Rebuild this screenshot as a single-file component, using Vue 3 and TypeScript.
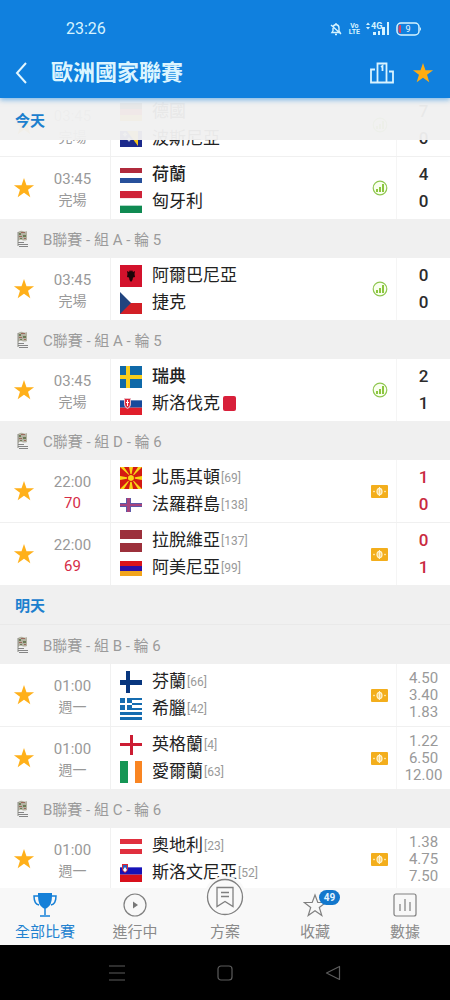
<script setup lang="ts">
interface Shape { d: string; c: string }
interface Team { name: string; flag: string; rank?: number; winner?: boolean; redCard?: boolean }
interface Match { kind: 'match'; time: string; status: string; live?: boolean; icon: 'stats' | 'ticket'; teams: Team[]; values: string[]; odds?: boolean }
interface Group { kind: 'group'; label: string }
interface Day { kind: 'day'; label: string }
type Item = Match | Group | Day

const rect = (x: number, y: number, w: number, h: number): string => `M${x} ${y}h${w}v${h}h${-w}z`
const bands = (top: number, height: number, colors: string[]): Shape[] =>
  colors.map((c, i) => ({ d: rect(0, top + (i * height) / colors.length, 22, height / colors.length), c }))

const flags: Record<string, Shape[]> = {
  de: bands(2, 18, ['#222', '#d8222c', '#f7b500']),
  ba: [
    { d: rect(0, 3, 22, 16), c: '#1c2a8c' },
    { d: 'M7 3H18V18z', c: '#f5c518' },
    { d: 'M5 4l1 1.500 1.500 1-1.500 1-1 1.500-1-1.500-1.500-1 1.500-1zM9 9l1 1.500 1.500 1-1.500 1-1 1.500-1-1.500-1.500-1 1.500-1z', c: '#c8cfe8' },
  ],
  nl: bands(4, 15, ['#b02a3c', '#fff', '#27509b']),
  hu: bands(0, 22, ['#cf2338', '#fff', '#0f8a52']),
  al: [
    { d: rect(0, 0, 22, 22), c: '#d3122c' },
    { d: 'M7 6l2 1 1-2 1 1.500L12 5l1 2 2-1-.5 3 .5 3-2 .500-.5 2.500L11 17l-1.500-2-.5-2.500-2-.500.500-3z', c: '#1b0508' },
  ],
  cz: [
    { d: rect(0, 0, 22, 11), c: '#fff' },
    { d: rect(0, 11, 22, 11), c: '#d21f26' },
    { d: 'M0 0L11 11 0 22z', c: '#20447f' },
  ],
  se: [
    { d: rect(0, 0, 22, 22), c: '#0f69a8' },
    { d: rect(6, 0, 4, 22) + rect(0, 9, 22, 4), c: '#f7ce1d' },
  ],
  sk: [
    ...bands(0, 22, ['#fff', '#174a9c', '#e01e2b']),
    { d: 'M4 5h7v6q0 3-3.500 5Q4 14 4 11z', c: '#e9b9c4' },
    { d: 'M5 6h5v5q0 2-2.500 4Q5 13 5 11z', c: '#dd2739' },
    { d: rect(7, 7, 1, 6) + rect(6, 9, 3, 1), c: '#fff' },
  ],
  mk: [
    { d: rect(0, 0, 22, 22), c: '#d41a12' },
    { d: 'M0 0h4l7 10zM9 0h4l-2 10zM18 0h4L11 11zM22 9v4l-11-2zM22 22h-4l-7-11zM13 22H9l2-11zM4 22H0l11-11zM0 13V9l11 2z', c: '#f9d616' },
    { d: 'M11 7a4 4 0 1 1-.1 0z', c: '#d41a12' },
    { d: 'M11 8a3 3 0 1 1-.1 0z', c: '#f9d616' },
  ],
  fo: [
    { d: rect(0, 4, 22, 14), c: '#fff' },
    { d: rect(6, 4, 5, 14) + rect(0, 9, 22, 4), c: '#5c59a8' },
    { d: rect(7, 4, 3, 14) + rect(0, 10, 22, 2), c: '#a8447d' },
  ],
  lv: [{ d: rect(0, 0, 22, 9) + rect(0, 13, 22, 9), c: '#9c303b' }],
  am: bands(4, 15, ['#d9141c', '#2b10a8', '#f2a51c']),
  fi: [{ d: rect(6, 0, 4, 22) + rect(0, 9, 22, 5), c: '#08367e' }],
  gr: [
    { d: rect(0, 0, 22, 22), c: '#156cb0' },
    { d: rect(12, 2, 10, 3) + rect(12, 7, 10, 3) + rect(0, 12, 22, 2) + rect(0, 17, 22, 2), c: '#fff' },
    { d: rect(5, 0, 2, 12) + rect(0, 5, 12, 2), c: '#fff' },
  ],
  en: [{ d: rect(10, 1, 3, 20) + rect(0, 9, 22, 3), c: '#cc1d33' }],
  ie: [
    { d: rect(0, 0, 8, 22), c: '#159655' },
    { d: rect(15, 0, 7, 22), c: '#f98522' },
  ],
  at: bands(4, 15, ['#e02f3e', '#fff', '#e02f3e']),
  si: [
    ...bands(-2, 22, ['#fff', '#1612b8', '#d8101c']),
    { d: 'M2 2h6v5q0 2-3 4Q2 9 2 7z', c: '#dc2635' },
    { d: 'M3 3h4v4q0 1-2 3Q3 8 3 7z', c: '#2b5cc0' },
    { d: 'M3 8l2-3 2 3-2 2z', c: '#fff' },
  ],
}

const ended = { kind: 'match', time: '03:45', status: '完場', icon: 'stats' } as const
const upcoming = { kind: 'match', time: '01:00', status: '週一', icon: 'ticket', odds: true } as const

const items: Item[] = [
  { ...ended, teams: [{ name: '德國', flag: 'de', winner: true }, { name: '波斯尼亞', flag: 'ba' }], values: ['7', '0'] },
  { ...ended, teams: [{ name: '荷蘭', flag: 'nl', winner: true }, { name: '匈牙利', flag: 'hu' }], values: ['4', '0'] },
  { kind: 'group', label: 'B聯賽 - 組 A - 輪 5' },
  { ...ended, teams: [{ name: '阿爾巴尼亞', flag: 'al' }, { name: '捷克', flag: 'cz' }], values: ['0', '0'] },
  { kind: 'group', label: 'C聯賽 - 組 A - 輪 5' },
  { ...ended, teams: [{ name: '瑞典', flag: 'se', winner: true }, { name: '斯洛伐克', flag: 'sk', redCard: true }], values: ['2', '1'] },
  { kind: 'group', label: 'C聯賽 - 組 D - 輪 6' },
  { kind: 'match', time: '22:00', status: '70', live: true, icon: 'ticket', teams: [{ name: '北馬其頓', flag: 'mk', rank: 69 }, { name: '法羅群島', flag: 'fo', rank: 138 }], values: ['1', '0'] },
  { kind: 'match', time: '22:00', status: '69', live: true, icon: 'ticket', teams: [{ name: '拉脫維亞', flag: 'lv', rank: 137 }, { name: '阿美尼亞', flag: 'am', rank: 99 }], values: ['0', '1'] },
  { kind: 'day', label: '明天' },
  { kind: 'group', label: 'B聯賽 - 組 B - 輪 6' },
  { ...upcoming, teams: [{ name: '芬蘭', flag: 'fi', rank: 66 }, { name: '希臘', flag: 'gr', rank: 42 }], values: ['4.50', '3.40', '1.83'] },
  { ...upcoming, teams: [{ name: '英格蘭', flag: 'en', rank: 4 }, { name: '愛爾蘭', flag: 'ie', rank: 63 }], values: ['1.22', '6.50', '12.00'] },
  { kind: 'group', label: 'B聯賽 - 組 C - 輪 6' },
  { ...upcoming, teams: [{ name: '奧地利', flag: 'at', rank: 23 }, { name: '斯洛文尼亞', flag: 'si', rank: 52 }], values: ['1.38', '4.75', '7.50'] },
]

const starPath = 'M12 1l2.700 8H23l-6.600 5 2.500 8L12 17.200 5.100 22l2.500-8L1 9h8.300z'
</script>

<template>
  <div class="app">
    <header class="top">
      <div class="status">
        <span class="clock">23:26</span>
        <div class="signals">
          <svg viewBox="0 0 12 14" width="12" height="14" fill="none" stroke="#d5f3ff" stroke-width="1.400">
            <path d="M3 9V6q0-3 3-3.500Q9 3 9 6v3l1 1.500H2L3 9M5 12.500h2M6 1v1.500M1 3l10 9" />
          </svg>
          <span class="volte"><span>Vo</span><span>LTE</span></span>
          <svg viewBox="0 0 26 16" width="26" height="16" fill="#d5f3ff">
            <path d="M1 4l2-2.500L5 4zM1 6l2 2.500L5 6zM8 11h3v3H8zM13 10h2v4h-2zM17 6h3v8h-3zM22 1h2v13h-2z" />
            <text x="6" y="8" font-size="9" font-weight="700">4G</text>
          </svg>
          <svg class="battery" viewBox="0 0 26 14" width="26" height="14">
            <rect x="1" y="1" width="22" height="12" rx="4" fill="none" stroke="#d5f3ff" stroke-width="1.500" />
            <path d="M24 5q2 2 0 4z" fill="#d5f3ff" />
            <path d="M4 3h1v8H4Q2.500 11 2.500 9V5Q2.500 3 4 3z" fill="#d8405f" />
            <text x="12" y="10" font-size="9" text-anchor="middle" fill="#e4f7ff">9</text>
          </svg>
        </div>
      </div>
      <div class="titlebar">
        <button class="back" aria-label="返回">
          <svg viewBox="0 0 14 22" width="14" height="22" fill="none" stroke="#e2f6ff" stroke-width="2"><path d="M12 1L3 11l9 10" /></svg>
        </button>
        <h1>歐洲國家聯賽</h1>
        <button aria-label="排名">
          <svg viewBox="0 0 24 22" width="24" height="22" fill="none" stroke="#d9f3ff" stroke-width="1.800">
            <path d="M7.500 20.500V1.500h9v19M5 7.500H1v13h22v-11h-4M11 5l1.500-1v5" />
          </svg>
        </button>
        <button class="fav" aria-label="收藏聯賽">
          <svg viewBox="0 0 24 24" width="22" height="22"><path :d="starPath" fill="#ffac10" /></svg>
        </button>
      </div>
    </header>

    <main class="content">
      <h2 class="day pinned">今天</h2>
      <ul class="list">
        <template v-for="(item, i) in items" :key="i">
          <li v-if="item.kind === 'day'" class="day">{{ item.label }}</li>
          <li v-else-if="item.kind === 'group'" class="group">
            <svg viewBox="0 0 12 18" width="12" height="18">
              <path d="M1 2q3-2 5-1t4 0v9q-3 1-5 0t-4 1z" fill="#b4b3a3" />
              <path d="M2 3h2v2H2zM6 5h3v2H6zM3 8h2v1H3z" fill="#6d7d58" />
              <path d="M4 2h4v1H4zM2 6h3v1H2zM7 8h2v1H7z" fill="#9b6a5c" />
              <path d="M1 2v14" stroke="#8c8c84" stroke-width="1" />
              <path d="M1 12h6v1H1zM1 14h10v1H1zM2 16h9v1H2z" fill="#858585" />
            </svg>
            <span>{{ item.label }}</span>
          </li>
          <li v-else class="match">
            <button aria-label="收藏">
              <svg viewBox="0 0 24 24" width="22" height="22"><path :d="starPath" fill="#ffb01a" /></svg>
            </button>
            <div class="when">
              <span class="time">{{ item.time }}</span>
              <span :class="item.live ? 'minute' : 'state'">{{ item.status }}</span>
            </div>
            <div class="teams">
              <div v-for="team in item.teams" :key="team.name" class="team">
                <svg viewBox="0 0 22 22" width="22" height="22">
                  <path v-for="(s, k) in flags[team.flag]" :key="k" :d="s.d" :fill="s.c" />
                </svg>
                <span class="name" :class="{ winner: team.winner }">{{ team.name }}</span>
                <span v-if="team.rank" class="rank">[{{ team.rank }}]</span>
                <span v-if="team.redCard" class="card"></span>
              </div>
            </div>
            <div class="badge">
              <svg v-if="item.icon === 'stats'" viewBox="0 0 16 16" width="16" height="16">
                <circle cx="8" cy="8" r="6.800" fill="#f9ffee" stroke="#8fc650" stroke-width="1.200" />
                <path d="M4 9h2v3H4zM7 7h2v5H7zM10 4h2v8h-2z" fill="#8cc63f" />
              </svg>
              <svg v-else class="ticket" viewBox="0 0 17 13" width="17" height="13">
                <rect width="17" height="13" rx="1" fill="#f3ae1c" />
                <ellipse cx="8.500" cy="6.500" rx="2.500" ry="3.200" fill="#f9d27a" stroke="#fff3cf" stroke-width="1.200" />
                <path d="M8.500 2v9" stroke="#fff3cf" stroke-width="1" />
                <path d="M2 6.500l1-1 1 1-1 1zM13 6.500l1-1 1 1-1 1z" fill="#fff3cf" />
              </svg>
            </div>
            <div class="values" :class="{ odds: item.odds, live: item.live }">
              <span v-for="(v, k) in item.values" :key="k">{{ v }}</span>
            </div>
          </li>
        </template>
      </ul>
    </main>

    <nav class="tabs">
      <button class="tab active">
        <svg viewBox="0 0 24 26" width="24" height="26">
          <path d="M5 1h14v3q0 9-5 12-2 1-4 0-5-3-5-12z" fill="#1580d8" />
          <path d="M5 4H1q0 8 5 9M19 4h4q0 8-5 9M12 16v7M7 24h10" fill="none" stroke="#1580d8" stroke-width="1.500" />
        </svg>
        <span>全部比賽</span>
      </button>
      <button class="tab">
        <svg viewBox="0 0 24 26" width="24" height="26">
          <circle cx="12" cy="13" r="11" fill="none" stroke="#808080" stroke-width="1.200" />
          <path d="M10 9.500l5 3.500-5 3.500z" fill="#777" />
        </svg>
        <span>進行中</span>
      </button>
      <button class="tab">
        <span class="bubble">
          <svg viewBox="0 0 38 38" width="38" height="38" fill="none" stroke="#808080" stroke-width="1.300">
            <circle cx="19" cy="19" r="17.500" />
            <path d="M11 9.500h16v19l-8-5-8 5zM15 14.500h8M15 18.500h8" />
          </svg>
        </span>
        <span>方案</span>
      </button>
      <button class="tab">
        <span class="starred">
          <svg viewBox="0 0 24 26" width="24" height="26">
            <path d="M12 3l2.800 7.500h8L16.300 15.500l2.500 8L12 18.800 5.200 23.500l2.500-8L1.200 10.500h8z" fill="none" stroke="#808080" stroke-width="1.200" />
          </svg>
          <b class="count">49</b>
        </span>
        <span>收藏</span>
      </button>
      <button class="tab">
        <svg viewBox="0 0 24 26" width="24" height="26" fill="none" stroke="#808080" stroke-width="1.200">
          <rect x="1" y="2" width="22" height="22" rx="2" />
          <path d="M7 12v7M12 7v12M17 10v9" />
        </svg>
        <span>數據</span>
      </button>
    </nav>

    <nav class="system">
      <button aria-label="最近">
        <svg viewBox="0 0 16 16" width="16" height="16"><path d="M0 1h16M0 8h16M0 15h16" /></svg>
      </button>
      <button aria-label="主畫面">
        <svg viewBox="0 0 16 16" width="16" height="16"><rect x="1" y="1" width="14" height="14" rx="3" /></svg>
      </button>
      <button aria-label="上一頁">
        <svg viewBox="0 0 16 16" width="16" height="16"><path d="M14.500 1.500v13L1.500 8z" stroke-linejoin="round" /></svg>
      </button>
    </nav>
  </div>
</template>

<style>
body {
  margin: 0;
  background: #000;
}
</style>

<style scoped>
.app {
  display: flex;
  flex-direction: column;
  height: 100vh;
  font-family: Roboto, "Noto Sans CJK TC", sans-serif;
  background: #fff;
  color: #222;
}

button {
  display: flex;
  align-items: center;
  justify-content: center;
  padding: 0;
  border: 0;
  background: none;
  font: inherit;
  color: inherit;
}

svg {
  display: block;
  flex: none;
}

.top {
  position: relative;
  z-index: 3;
  flex: none;
  background: #1080de;
  box-shadow: 0 2px 5px rgba(16, 128, 222, 0.5);
}

.status {
  display: flex;
  justify-content: space-between;
  align-items: center;
  height: 48px;
  padding: 9px 28px 0 66px;
  box-sizing: border-box;
  color: #d5f3ff;
}

.clock {
  font-size: 16px;
}

.signals {
  display: flex;
  align-items: center;
}

.volte {
  display: flex;
  flex-direction: column;
  align-items: center;
  margin: 0 5px 0 7px;
  font-size: 7px;
  line-height: 6px;
  font-weight: 700;
}

.battery {
  margin-left: 5px;
}

.titlebar {
  display: flex;
  align-items: center;
  height: 50px;
  padding: 0 16px 0 14px;
}

.back {
  margin-right: 23px;
}

h1 {
  flex: 1;
  margin: 0;
  font-size: 22px;
  line-height: 32px;
  font-weight: 700;
  color: #dcf5ff;
}

.fav {
  margin-left: 18px;
}

.content {
  position: relative;
  flex: 1;
  min-height: 0;
  overflow: hidden;
}

.list {
  margin: -4px 0 0;
  padding: 0;
  list-style: none;
}

.day {
  display: flex;
  align-items: center;
  height: 40px;
  padding-left: 15px;
  box-sizing: border-box;
  margin: 0;
  font-size: 15px;
  font-weight: 700;
  color: #1c80ce;
  background: #f0f0f0;
  border-bottom: 1px solid #e9e9e9;
}

.pinned {
  position: absolute;
  top: 0;
  left: 0;
  right: 0;
  height: 42px;
  border: 0;
  background: rgba(240, 240, 240, 0.96);
}

.group {
  display: flex;
  align-items: center;
  gap: 14px;
  height: 39px;
  padding-left: 17px;
  font-size: 15px;
  color: #9b9b9b;
  background: #f0f0f0;
}

.match {
  display: grid;
  grid-template-columns: 48px 62px 1fr 32px 54px;
  height: 62px;
  background: #fff;
}

.match + .match {
  border-top: 1px solid #f0f0f0;
}

.when {
  display: flex;
  flex-direction: column;
  align-items: center;
  justify-content: center;
  padding: 3px 13px 0 0;
  line-height: 21px;
  color: #999;
}

.time,
.minute {
  font-size: 15px;
}

.state {
  font-size: 14px;
}

.minute {
  color: #d62c46;
}

.teams {
  display: flex;
  flex-direction: column;
  justify-content: center;
  padding-left: 9px;
  border-left: 1px solid #f1f1f1;
}

.team {
  display: flex;
  align-items: center;
  height: 27px;
}

.name {
  margin-left: 10px;
  font-size: 17px;
  line-height: 27px;
  white-space: nowrap;
}

.winner {
  font-weight: 500;
}

.rank {
  margin-left: 1px;
  font-size: 12px;
  color: #999;
}

.card {
  width: 13px;
  height: 15px;
  margin-left: 3px;
  border-radius: 2px;
  background: #d8203a;
}

.badge {
  display: flex;
  align-items: center;
  justify-content: center;
}

.ticket {
  margin-right: 1px;
}

.values {
  display: flex;
  flex-direction: column;
  align-items: center;
  justify-content: center;
  border-left: 1px solid #f5f5f5;
  font-size: 17px;
  line-height: 27px;
  font-weight: 500;
  color: #2c2c2c;
}

.live {
  color: #c92a40;
}

.odds {
  font-size: 15px;
  line-height: 17px;
  font-weight: 400;
  color: #999;
}

.tabs {
  position: relative;
  z-index: 2;
  flex: none;
  display: grid;
  grid-template-columns: repeat(5, 1fr);
  height: 57px;
  background: #f8f8f8;
}

.tab {
  flex-direction: column;
  justify-content: flex-start;
  padding-top: 4px;
  font-size: 15px;
  line-height: 24px;
  color: #8a8a8a;
}

.tab > svg,
.starred {
  margin-bottom: 2px;
}

.active {
  color: #2382d0;
}

.bubble {
  margin: -16px 0 2px;
  padding: 2px;
  border-radius: 50%;
  background: #f9f9f9;
}

.starred {
  position: relative;
}

.count {
  position: absolute;
  left: 16px;
  top: -2px;
  width: 21px;
  border-radius: 8px;
  background: #1277cc;
  color: #e4f4ff;
  font-size: 10px;
  line-height: 15px;
  text-align: center;
}

.system {
  flex: none;
  display: flex;
  justify-content: center;
  gap: 92px;
  height: 55px;
  background: #000;
}

.system svg {
  fill: none;
  stroke: #5c5c5c;
  stroke-width: 1.2;
}
</style>
